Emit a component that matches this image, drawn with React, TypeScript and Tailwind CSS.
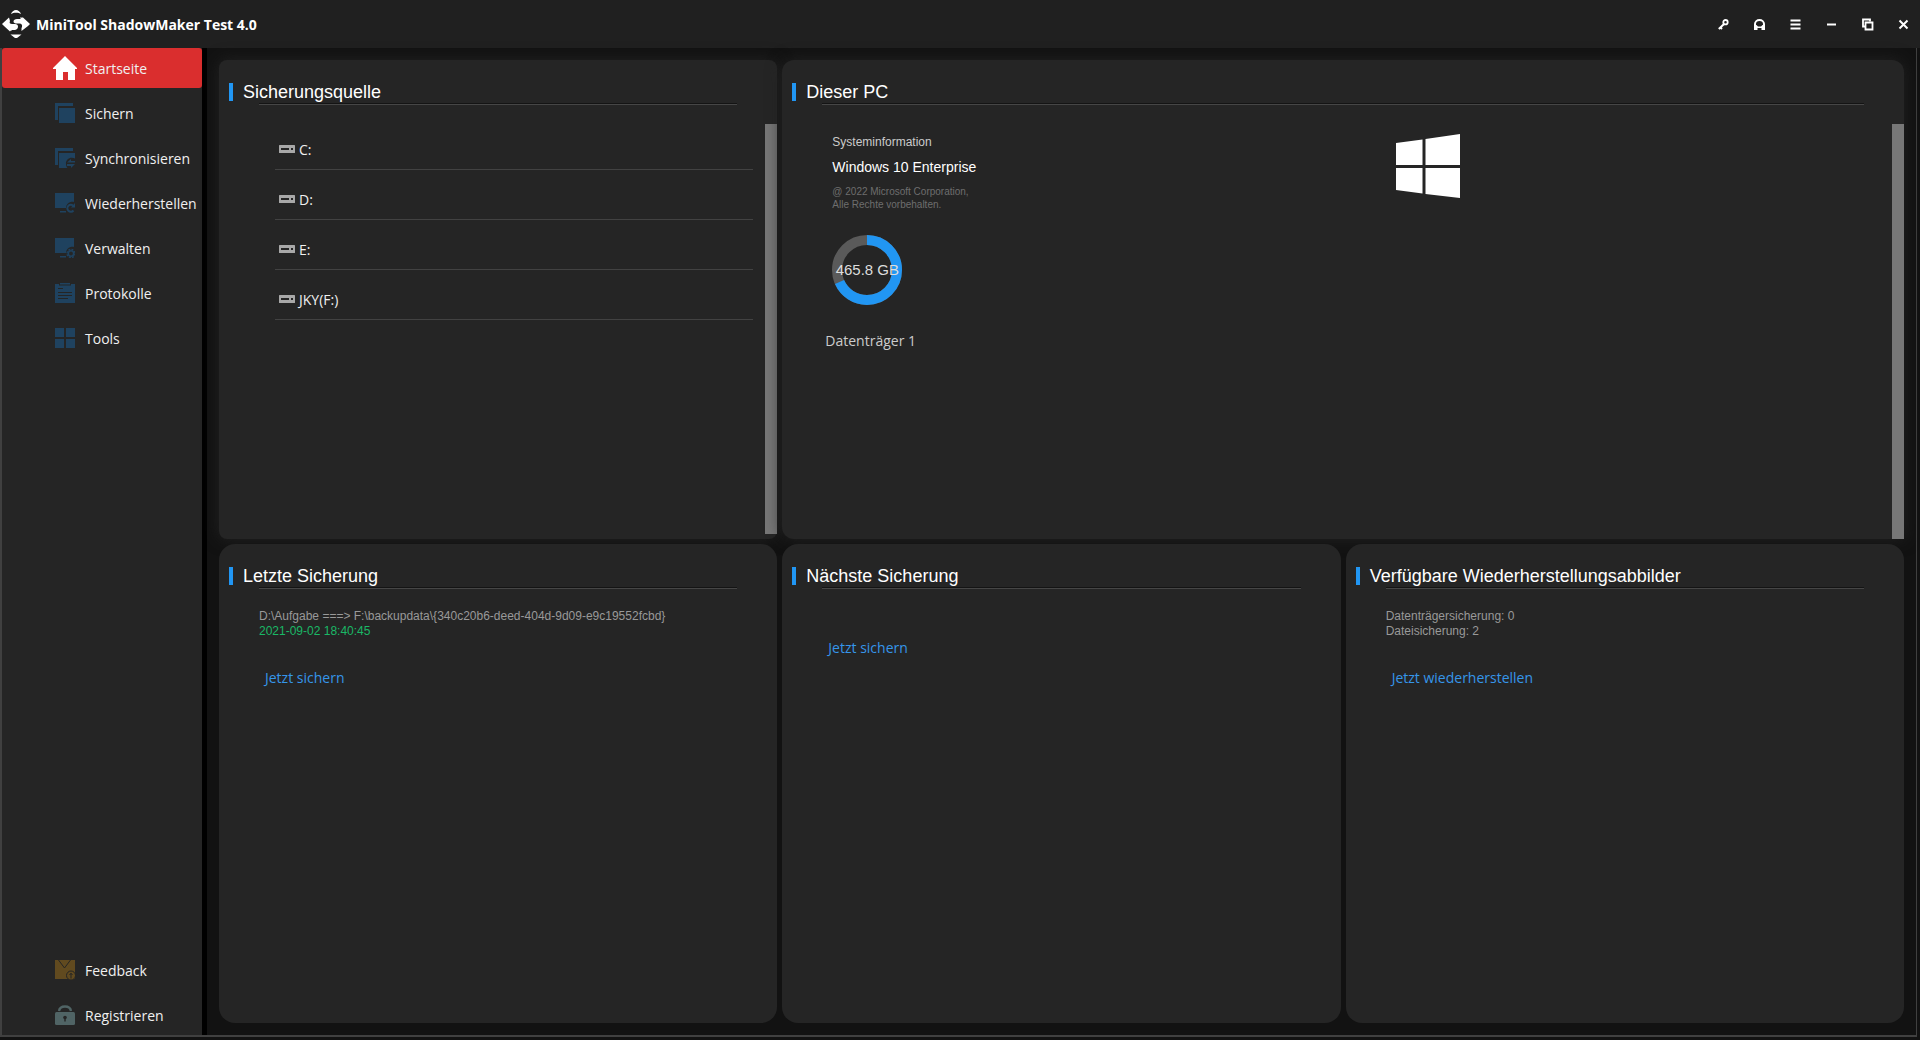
import type { ReactNode } from 'react';

interface NavEntry {
  label: string;
  icon: ReactNode;
  active?: boolean;
}

const drives = ['C:', 'D:', 'E:', 'JKY(F:)'];

const USED_SHARE = 0.683;
const RING_LENGTH = 2 * Math.PI * 30;

/* ---------- Icons ---------- */

function LogoIcon() {
  return (
    <svg className="h-7 w-7 shrink-0" viewBox="0 0 28 28" fill="#fff">
      <path d="M14 0c2 0 4.500 2 5 4c-1.500-1-3-1.300-5-1.300S10.500 3 9 4C9.500 2 12 0 14 0z" />
      <path d="M8.500 24.500h11L15 28h-2z" />
      <path d="M0 14l7-6.500l1 3.500c-1 2 0 3 2 3h3c2 0 3 1 3 2.500c0 2-1 3-3 3.500H9l-1 1.500L2 16z" />
      <path d="M28 14l-7-6.500h-1.500V9H15c-2 0-3.500 1-3.500 2.500S13 13.500 15 13.500h2.500c2 0 3 1.500 2.500 3.500l-.5 1v3L26 16z" />
      <path d="M18.500 7L23 10.500L18.500 13zM9.500 15L5 18.500L9.500 21z" />
    </svg>
  );
}

function HomeIcon() {
  return (
    <svg className="h-6 w-6" viewBox="0 0 24 24" fill="#fff">
      <path d="M12 0l12 12v1h-2v11h-7v-8h-5v8H3V13H0v-1z" />
    </svg>
  );
}

function BackupIcon() {
  return (
    <svg className="h-5 w-5" viewBox="0 0 20 20" fill="#1f425f">
      <path d="M0 0h18v3H3v14H0zM4 5h16v15H4z" />
    </svg>
  );
}

function SyncIcon() {
  return (
    <svg className="h-5 w-5" viewBox="0 0 20 20" fill="#1f425f">
      <path d="M0 0h18v3H3v14H0z" />
      <path d="M4 5h16v5.500c-5-2-9.500 1-9 5.500c0 1.500.5 3 1.500 4H4z" />
      <path d="M12 14.500l4-3.500v2h4v1.500zM20 16l-4 4v-2h-4v-2z" />
    </svg>
  );
}

function RestoreIcon() {
  return (
    <svg className="h-5 w-5" viewBox="0 0 20 20" fill="#1f425f">
      <path d="M0 0h19v9c-4-1-8 2-8 6H0zM5 18h6v1.500H5z" />
      <path d="M18.500 13a3.500 3.500 0 1 0 0 4.500" fill="none" stroke="#1f425f" strokeWidth="2" />
      <path d="M20 10v4.500h-4z" />
    </svg>
  );
}

function ManageIcon() {
  return (
    <svg className="h-5 w-5" viewBox="0 0 20 20" fill="#1f425f">
      <path d="M0 0h19v9c-4-1-8 2-8 6H0zM5 18h6v1.500H5z" />
      <circle cx="16" cy="15.500" r="2.700" fill="none" stroke="#1f425f" strokeWidth="1.600" />
      <circle cx="16" cy="15.500" r="4" fill="none" stroke="#1f425f" strokeWidth="1.400" strokeDasharray="2 1.140" />
    </svg>
  );
}

function LogIcon() {
  return (
    <svg className="h-5 w-5" viewBox="0 0 20 20">
      <path d="M0 1h4v1.500h12V1h4v19H0zM5 0h10v1.500H5z" fill="#1f425f" />
      <path d="M3 5.500h5M3 9.500h14M3 12.500h14M3 15.500h10" stroke="#252525" strokeWidth="1" />
    </svg>
  );
}

function ToolsIcon() {
  return (
    <svg className="h-5 w-5" viewBox="0 0 20 20" fill="#1f425f">
      <path d="M0 0h9v9H0zM11 0h9v9h-9zM0 11h9v9H0zM11 11h9v9h-9z" />
    </svg>
  );
}

function FeedbackIcon() {
  return (
    <svg className="h-5 w-5" viewBox="0 0 20 20">
      <path d="M0 0h20v19H0z" fill="#614a1f" />
      <path d="M3.500 0l6 8l6-8" fill="none" stroke="#252525" />
      <circle cx="16" cy="15.500" r="4.500" fill="#614a1f" stroke="#252525" />
      <path d="M16 18.500v-5M14.500 15l1.500-1.800l1.500 1.800" fill="none" stroke="#252525" />
    </svg>
  );
}

function RegisterIcon() {
  return (
    <svg className="h-5 w-5" viewBox="0 0 20 20">
      <rect y="7" width="20" height="13" rx="1.500" fill="#506465" />
      <path d="M4 6c1-6 11-6 12 0" fill="none" stroke="#506465" strokeWidth="2.400" />
      <circle cx="10" cy="12.500" r="1.800" fill="#252525" />
      <path d="M9.300 13h1.400v3.500H9.300z" fill="#252525" />
    </svg>
  );
}

function DriveIcon() {
  return (
    <svg className="mb-0.5 h-2 w-4" viewBox="0 0 16 8">
      <rect width="16" height="8" rx="0.500" fill="#a8a8a8" />
      <path d="M2 3h8v2H2zM12 3h2v2h-2z" fill="#252525" />
    </svg>
  );
}

function WindowsLogo() {
  return (
    <svg className="h-16 w-16" viewBox="0 0 64 64" fill="#fff">
      <path d="M0 9l26.500-3.500V31H0zM29.500 5L64 0v31H29.500zM0 34h26.500v25.500L0 56zM29.500 34H64v30l-34.500-4z" />
    </svg>
  );
}

/* ---------- Window chrome ---------- */

const windowActions = [
  {
    label: 'Lizenz',
    icon: (
      <g fill="none" stroke="#fff">
        <circle cx="7.500" cy="3.200" r="2.200" strokeWidth="1.800" />
        <path d="M6 5L.8 10M2.500 8.500l1.500 1.500" strokeWidth="2" />
      </g>
    ),
  },
  {
    label: 'Support',
    icon: (
      <g>
        <path d="M1 8V5a4.500 4 0 0 1 9 0V8" fill="none" stroke="#fff" strokeWidth="2" />
        <path d="M0 6h2.500L4 7.500h3L8.500 6H11v5H7.500V9h-4v2H0z" fill="#fff" />
      </g>
    ),
  },
  { label: 'Menü', icon: <path d="M.5 1.500h10M.5 5.500h10M.5 9.500h10" stroke="#fff" strokeWidth="2" /> },
  { label: 'Minimieren', icon: <path d="M1 5.500h9" stroke="#fff" strokeWidth="2" /> },
  {
    label: 'Verkleinern',
    icon: (
      <g fill="none" stroke="#fff" strokeWidth="1.800">
        <path d="M3 7.500H1V.5h7v2" />
        <path d="M3.500 3.500h7v7h-7z" />
      </g>
    ),
  },
  { label: 'Schließen', icon: <path d="M1.500 1.500l8 8M9.500 1.500l-8 8" stroke="#fff" strokeWidth="2" /> },
];

function TitleBar() {
  return (
    <header className="flex h-12 shrink-0 items-center justify-between bg-[#202020] pr-[5px] pl-0.5">
      <div className="flex items-center gap-1.5">
        <LogoIcon />
        <h1 className="text-[14px] font-bold text-white">MiniTool ShadowMaker Test 4.0</h1>
      </div>
      <div className="flex gap-3">
        {windowActions.map((action) => (
          <button key={action.label} aria-label={action.label} className="flex h-6 w-6 items-center justify-center">
            <svg className="h-[11px] w-[11px] overflow-visible" viewBox="0 0 11 11">
              {action.icon}
            </svg>
          </button>
        ))}
      </div>
    </header>
  );
}

const mainNav: NavEntry[] = [
  { label: 'Startseite', icon: <HomeIcon />, active: true },
  { label: 'Sichern', icon: <BackupIcon /> },
  { label: 'Synchronisieren', icon: <SyncIcon /> },
  { label: 'Wiederherstellen', icon: <RestoreIcon /> },
  { label: 'Verwalten', icon: <ManageIcon /> },
  { label: 'Protokolle', icon: <LogIcon /> },
  { label: 'Tools', icon: <ToolsIcon /> },
];

const footerNav: NavEntry[] = [
  { label: 'Feedback', icon: <FeedbackIcon /> },
  { label: 'Registrieren', icon: <RegisterIcon /> },
];

function NavButton({ label, icon, active }: NavEntry) {
  return (
    <button
      className={`flex h-10 w-full items-center gap-2 rounded-[3px] pl-[51px] text-left text-[14px] whitespace-nowrap text-[#f0f0f0] ${
        active ? 'bg-[#da2e2e]' : ''
      }`}
    >
      <span className="flex w-6 justify-center">{icon}</span>
      {label}
    </button>
  );
}

function Sidebar() {
  return (
    <nav className="flex w-[205px] shrink-0 flex-col justify-between border-r-[5px] border-black bg-[#252525]">
      <div className="flex flex-col gap-[5px]">
        {mainNav.map((entry) => (
          <NavButton key={entry.label} {...entry} />
        ))}
      </div>
      <div className="flex flex-col gap-[5px]">
        {footerNav.map((entry) => (
          <NavButton key={entry.label} {...entry} />
        ))}
      </div>
    </nav>
  );
}

/* ---------- Dashboard ---------- */

function Card({ title, className, children }: { title: string; className: string; children: ReactNode }) {
  return (
    <section className={`flex flex-col bg-[#252525] ${className}`}>
      <div className="mt-[23px] ml-2.5 flex h-[18px] items-center gap-2.5">
        <span className="h-full w-1 bg-[#2196f3]" />
        <h2 className="font-['Liberation_Sans',Arial,sans-serif] text-[18px] leading-[18px] text-white">{title}</h2>
      </div>
      <div className="mx-10 mt-0.5 h-0.5 shrink-0 border-t border-b border-t-[#141414] border-b-[#464646]" />
      {children}
    </section>
  );
}

function ActionLink({ children }: { children: ReactNode }) {
  return (
    <a href="#" className="ml-1.5 text-[14px] leading-5 text-[#3596ea]">
      {children}
    </a>
  );
}

function SourceCard() {
  return (
    <Card title="Sicherungsquelle" className="rounded-lg shadow-[0_0_16px_#222]">
      <div className="flex min-h-0 flex-1">
        <ul className="mt-[15px] mr-3 ml-14 flex-1">
          {drives.map((drive) => (
            <li key={drive} className="flex h-[50px] items-center gap-1 border-b border-[#424242] pt-2.5 pl-1 text-[14px] text-[#f0f0f0]">
              <DriveIcon />
              {drive}
            </li>
          ))}
        </ul>
        <div className="mt-[19px] mb-[5px] w-3 bg-[#777]" />
      </div>
    </Card>
  );
}

function DiskRing() {
  return (
    <div className="relative mt-6 h-[70px] w-[70px]">
      <svg className="h-full w-full -rotate-90" viewBox="0 0 70 70" fill="none" strokeWidth="10">
        <circle cx="35" cy="35" r="30" stroke="#5a5a5a" />
        <circle cx="35" cy="35" r="30" stroke="#2196f3" strokeDasharray={`${RING_LENGTH * USED_SHARE} ${RING_LENGTH}`} />
      </svg>
      <span className="absolute inset-0 flex items-center justify-center whitespace-nowrap text-[15px] text-[#ddd]">465.8 GB</span>
    </div>
  );
}

function ThisPcCard() {
  return (
    <Card title="Dieser PC" className="col-span-2 rounded-xl rounded-br-none shadow-[0_0_16px_#222]">
      <div className="flex min-h-0 flex-1">
        <div className="mt-[29px] ml-[50px] grid flex-1 grid-cols-2 content-start">
          <div className="font-['Liberation_Sans',Arial,sans-serif]">
            <p className="text-[12px] leading-4 text-[#ccc]">Systeminformation</p>
            <p className="mt-[7px] text-[14px] leading-5 text-white">Windows 10 Enterprise</p>
            <p className="mt-2 text-[10px] leading-[13px] text-[#6e6e6e]">
              @ 2022 Microsoft Corporation,
              <br />
              Alle Rechte vorbehalten.
            </p>
            <DiskRing />
          </div>
          <div className="pl-[34px]">
            <WindowsLogo />
          </div>
          <p className="mt-[26px] -ml-[7px] text-[14px] leading-5 text-[#ccc]">Datenträger 1</p>
        </div>
        <div className="mt-[19px] w-3 bg-[#777]" />
      </div>
    </Card>
  );
}

export default function App() {
  return (
    <div className="flex h-screen min-h-[600px] flex-col bg-[#121212] pb-[3px] font-['Open_Sans','Segoe_UI',sans-serif]">
      <TitleBar />
      <div className="mr-[3px] flex min-h-0 flex-1 border-r border-b-2 border-l-2 border-[#404040]">
        <Sidebar />
        <main className="grid min-w-0 flex-1 grid-cols-3 grid-rows-2 gap-[5px] p-3">
          <SourceCard />
          <ThisPcCard />

          <Card title="Letzte Sicherung" className="rounded-2xl">
            <div className="mx-10 mt-5 flex flex-col items-start">
              <p className="font-['Liberation_Sans',Arial,sans-serif] text-[12px] leading-[15px] text-[#999]">
                {'D:\\Aufgabe ===> F:\\backupdata\\{340c20b6-deed-404d-9d09-e9c19552fcbd}'}
              </p>
              <p className="mb-[29px] font-['Liberation_Sans',Arial,sans-serif] text-[12px] leading-[15px] text-[#1ab866]">
                2021-09-02 18:40:45
              </p>
              <ActionLink>Jetzt sichern</ActionLink>
            </div>
          </Card>

          <Card title="Nächste Sicherung" className="rounded-2xl">
            <div className="mx-10 mt-[49px] flex flex-col items-start">
              <ActionLink>Jetzt sichern</ActionLink>
            </div>
          </Card>

          <Card title="Verfügbare Wiederherstellungsabbilder" className="rounded-2xl">
            <div className="mx-10 mt-5 flex flex-col items-start">
              <p className="mb-[29px] font-['Liberation_Sans',Arial,sans-serif] text-[12px] leading-[15px] text-[#999]">
                Datenträgersicherung: 0
                <br />
                Dateisicherung: 2
              </p>
              <ActionLink>Jetzt wiederherstellen</ActionLink>
            </div>
          </Card>
        </main>
      </div>
    </div>
  );
}
